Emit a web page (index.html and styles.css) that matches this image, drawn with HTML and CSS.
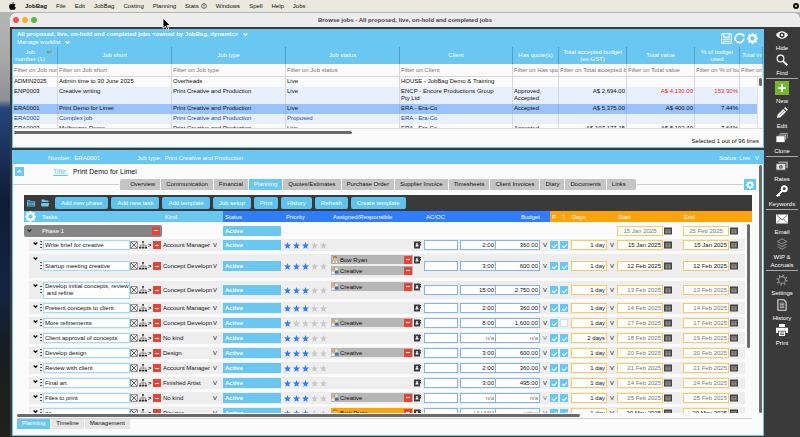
FILE: index.html
```html
<!DOCTYPE html>
<html lang="en">
    <head>
        <meta charset="UTF-8" />
        <meta name="viewport" content="width=device-width, initial-scale=1.0" />
        <title>Browse jobs</title>
        <link rel="stylesheet" href="styles.css">
    </head>
    <body>
        <svg class="sprite" aria-hidden="true">
            <symbol id="i-gear" viewBox="0 0 16 16">
                <path fill-rule="evenodd" fill="currentColor" d="M6.800 0h2.400l.4 2.100 1.300.5L12.700 1.400l1.900 1.900-1.200 1.800.5 1.300 2.100.4v2.400l-2.100.4-.5 1.300 1.200 1.800-1.900 1.900-1.800-1.200-1.300.5L9.200 16H6.800l-.4-2.100-1.300-.5-1.800 1.200-1.900-1.900 1.200-1.800-.5-1.300L0 9.200V6.800l2.100-.4.5-1.300-1.200-1.800 1.900-1.900 1.800 1.200 1.300-.5zM8 4.800a3.200 3.200 0 1 0 0 6.400 3.200 3.200 0 0 0 0-6.400z" />
            </symbol>
            <symbol id="i-star" viewBox="0 0 16 16">
                <path fill="currentColor" d="M8 0l2.200 5.500 5.800.4-4.500 3.800 1.500 5.900L8 12.400l-5 3.200 1.500-5.900L0 5.900l5.800-.4z" />
            </symbol>
            <symbol id="i-chevron" viewBox="0 0 8 8">
                <path fill="none" stroke="currentColor" stroke-width="2" d="M1 2.500l3 3 3-3" />
            </symbol>
            <symbol id="i-cross" viewBox="0 0 14 14">
                <path fill="none" stroke="#444" d="M1 1h12v12H1z" />
                <path fill="none" stroke="#333" stroke-width="1.300" d="M2 2l10 10M12 2L2 12" />
            </symbol>
            <symbol id="i-tree" viewBox="0 0 14 14">
                <path fill="none" stroke="#555" d="M7 3v7M2 10V7h10v3" />
                <path fill="#333" d="M5.500 0h3v3h-3zM0 10h4v3H0zM5 10h4v3H5zM10 10h4v3h-4z" />
            </symbol>
            <symbol id="i-calendar" viewBox="0 0 16 16">
                <path fill="#444" d="M0 1h16v14H0z" />
                <path stroke="#bbb" stroke-width="1" d="M2 5.500h12M2 8.500h12M2 11.500h12M5.500 5v8M10.500 5v8" />
            </symbol>
            <symbol id="i-contact" viewBox="0 0 14 14">
                <path fill="#3c3c3c" d="M0 0h12v14H0zM12 1h2v3h-2zM12 5h2v3h-2z" />
                <path fill="#fff" d="M6 3a1.800 1.800 0 0 1 1 3.300l2 1.700v2H3V8l2-1.700A1.800 1.800 0 0 1 6 3z" />
            </symbol>
            <symbol id="i-person" viewBox="0 0 14 14">
                <path fill="#fff" stroke="#7b8fb0" d="M2 13V9l3-2h4l3 2v4z" />
                <circle cx="7" cy="4" r="3.500" fill="#e9b872" />
                <path fill="#9a5b20" d="M3.500 4a3.500 3.500 0 0 1 7 0L7 2z" />
                <path fill="#e57c2c" d="M6 8h2v5H6z" />
            </symbol>
            <symbol id="i-group" viewBox="0 0 16 14">
                <path fill="#fff" stroke="#a9bbd6" d="M1 13V9l3-2 3 2v4z" />
                <path fill="#3d70b5" d="M8 12V7l3-2 4 2v5z" />
                <circle cx="5" cy="5" r="3" fill="#efbd72" />
                <circle cx="11" cy="3" r="3" fill="#f5dcaa" />
                <path fill="#b87a38" d="M2 5a3 3 0 0 1 6 0L5 3z" />
            </symbol>
        </svg>

        <nav class="menubar">
            <svg class="apple" viewBox="0 0 14 16" aria-hidden="true"><path d="M9.500 0c.2 1.800-1.200 3.300-2.800 3.400C6.500 1.700 8 .2 9.500 0zM7 4.500c.8 0 1.800-1 3.300-.9 1.200.1 2.200.6 2.900 1.600-2.600 1.700-2.100 5 .6 6-.7 1.900-2.100 4.600-3.700 4.600-1.200 0-1.700-.7-3-.7s-1.900.7-3 .7C1.800 15.800-.4 10.500.5 7.200 1.200 4.700 3 3.600 4.600 3.600c1 0 1.800.9 2.400.9z" /></svg>
            <a href="#" class="app-name">JobBag</a>
            <a href="#">File</a>
            <a href="#">Edit</a>
            <a href="#">JobBag</a>
            <a href="#">Costing</a>
            <a href="#">Planning</a>
            <a href="#">Stats
                <svg class="clock" viewBox="0 0 10 10" aria-hidden="true"><circle cx="5" cy="5" r="4" /><path d="M5 2.500V5.500M5 6.500v1" /></svg></a>
            <a href="#">Windows</a>
            <a href="#">Spell</a>
            <a href="#">Help</a>
            <a href="#">Jobs</a>
            <span class="status-dot"></span>
        </nav>

        <div class="window">
            <header class="titlebar">
                <span class="light red"></span>
                <span class="light amber"></span>
                <span class="light green"></span>
                <h1>Browse jobs - All proposed, live, on-hold and completed jobs</h1>
            </header>

            <div class="workspace">
                <main class="main">
                    <section class="panel jobs">
                        <div class="jobs-top">
                            <div class="worklist">
                                <button class="bold">All proposed, live, on-hold and completed jobs &lt;owned by JobBag, dynamic&gt; <svg class="chevron"><use href="#i-chevron" /></svg></button>
                                <button>Manage worklist <svg class="chevron"><use href="#i-chevron" /></svg></button>
                            </div>
                            <div class="jobs-tools">
                                <button aria-label="Save"><svg viewBox="0 0 16 16"><path fill="none" stroke="#fff" stroke-width="1.500" d="M1 1h14v14H1zM4 1v5h8V1M3 9h10M3 12h10" /></svg></button>
                                <button aria-label="Reload"><svg viewBox="0 0 16 16"><path fill="none" stroke="#fff" stroke-width="2.400" d="M12 2.800A6.300 6.300 0 1 0 14.300 8" /><path fill="#fff" d="M9.500 1H15v5.500z" /></svg></button>
                                <button aria-label="List settings"><svg class="white"><use href="#i-gear" /></svg></button>
                            </div>
                        </div>
                        <div class="jobs-scroll">
                            <table class="jobs-table">
                                <colgroup>
                                    <col class="c-number"><col class="c-long"><col class="c-long"><col class="c-long"><col class="c-client">
                                    <col class="c-short"><col class="c-money"><col class="c-money"><col class="c-number"><col>
                                </colgroup>
                                <thead>
                                    <tr>
                                        <th>Job <span class="sort">↩</span><br>number (1)</th>
                                        <th>Job short</th>
                                        <th>Job type</th>
                                        <th>Job status</th>
                                        <th>Client</th>
                                        <th>Has quote(s)</th>
                                        <th>Total accepted budget (ex-GST)</th>
                                        <th>Total value</th>
                                        <th>% of budget used</th>
                                        <th>Total inv</th>
                                    </tr>
                                    <tr class="filters">
                                        <td><input type="text" placeholder="Filter on Job number" aria-label="Filter on Job number"></td>
                                        <td><input type="text" placeholder="Filter on Job short" aria-label="Filter on Job short"></td>
                                        <td><input type="text" placeholder="Filter on Job type" aria-label="Filter on Job type"></td>
                                        <td><input type="text" placeholder="Filter on Job status" aria-label="Filter on Job status"></td>
                                        <td><input type="text" placeholder="Filter on Client" aria-label="Filter on Client"></td>
                                        <td><input type="text" placeholder="Filter on Has quote(s)" aria-label="Filter on Has quote(s)"></td>
                                        <td><input type="text" placeholder="Filter on Total accepted budget" aria-label="Filter on Total accepted budget"></td>
                                        <td><input type="text" placeholder="Filter on Total value" aria-label="Filter on Total value"></td>
                                        <td><input type="text" placeholder="Filter on % of budget used" aria-label="Filter on % of budget used"></td>
                                        <td><input type="text" placeholder="Filter on Total invoiced" aria-label="Filter on Total invoiced"></td>
                                    </tr>
                                </thead>
                                <tbody>
                                    <tr>
                                        <td>ADMIN2025</td><td>Admin time to 30 June 2025</td><td>Overheads</td><td>Live</td><td>HOUSE - JobBag Demo &amp; Training</td>
                                        <td></td><td></td><td></td><td></td><td></td>
                                    </tr>
                                    <tr class="even double">
                                        <td>ENP0003</td><td>Creative writing</td><td>Print Creative and Production</td><td>Live</td><td>ENCP - Encore Productions Group<br>Pty Ltd</td>
                                        <td>Approved, Accepted</td><td class="num">A$ 2,694.00</td><td class="num over">A$ 4,130.00</td><td class="num over">153.30%</td><td></td>
                                    </tr>
                                    <tr class="selected">
                                        <td>ERA0001</td><td>Print Demo for Limei</td><td>Print Creative and Production</td><td>Live</td><td>ERA - Era-Co</td>
                                        <td>Accepted</td><td class="num">A$ 5,375.00</td><td class="num">A$ 400.00</td><td class="num">7.44%</td><td></td>
                                    </tr>
                                    <tr class="even proposed">
                                        <td>ERA0002</td><td>Complex job</td><td>Print Creative and Production</td><td>Proposed</td><td>ERA - Era-Co</td>
                                        <td></td><td></td><td></td><td></td><td></td>
                                    </tr>
                                    <tr>
                                        <td>ERA0003</td><td>Melbourne Demo</td><td>Print Creative and Production</td><td>Live</td><td>ERA - Era-Co</td>
                                        <td>Accepted</td><td class="num">A$ 107,177.25</td><td class="num">A$ 8,192.40</td><td class="num">7.64%</td><td></td>
                                    </tr>
                                </tbody>
                            </table>
                            <div class="track"><span class="thumb"></span></div>
                        </div>
                        <div class="hbar jobs-hbar"></div>
                        <p class="selection">Selected 1 out of 96 lines</p>
                    </section>

                    <section class="panel job">
                        <div class="job-info">
                            <span>Number:&nbsp; ERA0001</span>
                            <span>Job type:&nbsp; Print Creative and Production</span>
                            <span class="job-status">Status: Live <span class="vee">V</span></span>
                        </div>
                        <div class="job-body">
                            <div class="job-content">
                                <div class="job-title">
                                    <button class="collapse" aria-label="Collapse"><svg viewBox="0 0 8 8"><path fill="none" stroke="#fff" stroke-width="2" d="M1 5.500l3-3 3 3" /></svg></button>
                                    <label for="title">Title:</label>
                                    <input type="text" id="title" value="Print Demo for Limei">
                                </div>
                                <div class="tabs">
                                    <a href="#" class="first">Overview</a>
                                    <a href="#">Communication</a>
                                    <a href="#">Financial</a>
                                    <a href="#" class="active">Planning</a>
                                    <a href="#">Quotes/Estimates</a>
                                    <a href="#">Purchase Order</a>
                                    <a href="#">Supplier Invoice</a>
                                    <a href="#">Timesheets</a>
                                    <a href="#">Client Invoices</a>
                                    <a href="#">Diary</a>
                                    <a href="#">Documents</a>
                                    <a href="#" class="last">Links</a>
                                    <button class="tab-gear" aria-label="Tab settings"><svg class="white"><use href="#i-gear" /></svg></button>
                                </div>
                                <div class="planner">
                                    <div class="toolbar">
                                        <button class="icon" aria-label="Expand all"><svg viewBox="0 0 16 16"><path fill="#55bfec" d="M0 2h6l2 2h8v11H0z" /><path stroke="#333" d="M2 7h12M2 10h12M2 13h12M0 4.500h16" /></svg></button>
                                        <button class="icon" aria-label="Collapse all"><svg viewBox="0 0 16 16"><path fill="#6cc8f0" d="M1 1h6l2 2h6v3H1zM0 8h16l-1 7H1z" /></svg></button>
                                        <button>Add new phase</button>
                                        <button>Add new task</button>
                                        <button>Add template</button>
                                        <button>Job setup</button>
                                        <button>Print</button>
                                        <button>History</button>
                                        <button>Refresh</button>
                                        <button>Create template</button>
                                    </div>
                                    <div class="task-scroll">
                                        <table class="tasks">
                                            <colgroup>
                                                <col class="w-edge"><col class="w-open"><col class="w-task"><col class="w-acts"><col class="w-kind">
                                                <col class="w-status"><col class="w-stars"><col class="w-who"><col class="w-book"><col class="w-ac">
                                                <col class="w-hours"><col class="w-budget"><col class="w-vee"><col class="w-p"><col class="w-t">
                                                <col class="w-days"><col class="w-vee"><col class="w-start"><col><col class="w-gutter">
                                            </colgroup>
                                            <thead>
                                                <tr>
                                                    <th colspan="2" class="sky gear-cell"><svg class="white"><use href="#i-gear" /></svg></th>
                                                    <th colspan="2" class="sky">Tasks</th>
                                                    <th class="sky">Kind</th>
                                                    <th class="blue">Status</th>
                                                    <th class="blue">Priority</th>
                                                    <th class="blue" colspan="2">Assigned/Responsible</th>
                                                    <th class="blue" colspan="2">AC/OC</th>
                                                    <th class="blue right">Budget</th>
                                                    <th class="blue"></th>
                                                    <th class="orange pick">P</th>
                                                    <th class="orange pick">T</th>
                                                    <th class="orange" colspan="2">Days</th>
                                                    <th class="orange">Start</th>
                                                    <th class="orange" colspan="2">End</th>
                                                </tr>
                                            </thead>
                                            <tbody id="tasks">
                                                <tr class="phase">
                                                    <td colspan="4">
                                                        <div class="phase-bar">
                                                            <svg class="chevron"><use href="#i-chevron" /></svg>
                                                            <span>Phase 1</span>
                                                            <button class="minus" aria-label="Remove phase"></button>
                                                        </div>
                                                    </td>
                                                    <td></td>
                                                    <td><div class="state">Active</div></td>
                                                    <td colspan="11"></td>
                                                    <td><div class="date"><input type="text" class="late" value="15 Jan 2025" aria-label="Phase start"><svg><use href="#i-calendar" /></svg></div></td>
                                                    <td><div class="date"><input type="text" class="late" value="25 Feb 2025" aria-label="Phase end"><svg><use href="#i-calendar" /></svg></div></td>
                                                    <td></td>
                                                </tr>
                                            </tbody>
                                        </table>
                                        <span class="thumb task-thumb"></span>
                                    </div>
                                </div>
                            </div>
                            <span class="thumb job-thumb"></span>
                        </div>
                        <div class="hbar job-hbar"></div>
                        <div class="views">
                            <a href="#" class="active">Planning</a>
                            <a href="#">Timeline</a>
                            <a href="#">Management</a>
                        </div>
                    </section>
                </main>

                <aside class="sidebar">
                    <div class="group">
                        <button><svg viewBox="0 0 16 16"><path fill="#fff" d="M0 8c4-6.500 12-6.500 16 0-4 6.500-12 6.500-16 0z" /><circle cx="8" cy="8" r="3.500" fill="#3a3a3a" /><circle cx="8" cy="8" r="1.500" fill="#fff" /></svg>Hide</button>
                        <button><svg viewBox="0 0 16 16"><circle cx="6" cy="6" r="4.500" fill="none" stroke="#fff" stroke-width="1.500" /><path stroke="#fff" stroke-width="2.500" d="M9.500 9.500L15 15" /></svg>Find</button>
                    </div>
                    <div class="group">
                        <button><svg class="new" viewBox="0 0 16 16"><path fill="#74b62e" d="M0 0h16v16H0z" /><path stroke="#fff" stroke-width="2" d="M8 3.500v9M3.500 8h9" /></svg>New</button>
                        <button><svg viewBox="0 0 16 16"><path fill="#eee" d="M1 15l1.200-5 7.500-7.500 3.800 3.800L6 13.800zM10.700 1.600L12.300 0 16 3.700l-1.600 1.600z" /><path stroke="#777" d="M4.500 11.500l7-7" /></svg>Edit</button>
                        <button><svg viewBox="0 0 16 16"><path fill="#bbb" stroke="#3a3a3a" d="M5 1h11v8H5z" /><path fill="#ddd" stroke="#3a3a3a" d="M3 3h11v8H3z" /><path fill="#fff" stroke="#3a3a3a" d="M0 5h12v9H0z" /></svg>Clone</button>
                    </div>
                    <div class="group">
                        <button><svg viewBox="0 0 16 16"><path fill="#999" d="M3 2h13v9H3z" /><path fill="#ddd" stroke="#3a3a3a" d="M0 4.500h13v9H0z" /><circle cx="6.500" cy="9" r="2.500" fill="#555" /><path stroke="#ddd" d="M6.500 7.500v3" /></svg>Rates</button>
                        <button><svg viewBox="0 0 16 16"><circle cx="11" cy="5" r="3.300" fill="none" stroke="#fff" stroke-width="2.800" /><path fill="none" stroke="#fff" stroke-width="2.500" d="M8.500 7.500L1 15M2.500 12l2.500 2.500" /></svg>Keywords</button>
                    </div>
                    <div class="group">
                        <button><svg viewBox="0 0 16 16"><path fill="#fff" d="M0 2h16v12H0z" /><path fill="none" stroke="#555" d="M1 3l7 6 7-6M1 13l5-5M15 13l-5-5" /></svg>Email</button>
                        <button><svg viewBox="0 0 16 16"><path fill="none" stroke="#888" stroke-width="1.400" d="M8 1l6 3.500L8 8 2 4.500zM2 8l6 3.500L14 8M2 11.500L8 15l6-3.500" /></svg>WIP &amp; Accruals</button>
                    </div>
                    <div class="group">
                        <button><svg viewBox="0 0 16 16"><circle cx="8" cy="8" r="4.500" fill="none" stroke="#999" stroke-width="1.400" /><circle cx="8" cy="8" r="6.500" fill="none" stroke="#999" stroke-width="2" stroke-dasharray="2 3.100" /></svg>Settings</button>
                        <button><svg viewBox="0 0 16 16"><path fill="none" stroke="#ddd" stroke-width="1.500" d="M2.500 1h8l3 3v11h-11z" /><path stroke="#ddd" d="M5 5.500h6M5 7.500h6M5 9.500h6M5 11.500h6" /></svg>History</button>
                        <button><svg viewBox="0 0 16 16"><path fill="#fff" d="M4 0h8v4H4zM0 5h16v7h-3V9H3v3H0zM4 10h8v6H4z" /><path stroke="#3a3a3a" d="M5.500 12h5M5.500 14h5" /></svg>Print</button>
                    </div>
                </aside>
            </div>
        </div>

        <svg class="pointer" viewBox="0 0 10 16" aria-hidden="true"><path fill="#000" stroke="#fff" d="M1 1v12l2.800-2.500L5.700 15l2-.9-1.900-4.200h3.700z" /></svg>

        <script src="script.js"></script>
    </body>
</html>
```

FILE: styles.css
```css
* {
    box-sizing: border-box;
}
body {
    display: flex;
    flex-direction: column;
    height: 100vh;
    margin: 0;
    overflow: hidden;
    background: linear-gradient(#b9babb 0, #a9a6a6 60px, #8d8f98 100px, #24457d 108px, #1d3763 140px, #0f1c38 200px, #13233f 290px, #171d20 350px, #20211b 100%);
    font-family: 'Liberation Sans', Arial, sans-serif;
    font-size: 6px;
    line-height: 8px;
    color: #111;
}
button,
input,
textarea,
select {
    margin: 0;
    padding: 0;
    border: 0;
    border-radius: 0;
    background: none;
    color: inherit;
    font: inherit;
}
button {
    cursor: pointer;
}
a {
    color: inherit;
    text-decoration: none;
}
svg {
    display: block;
}
.sprite {
    position: absolute;
    width: 0;
    height: 0;
}
.white {
    color: #fff;
}
.bold {
    font-weight: bold;
}
.chevron {
    width: 5px;
    height: 5px;
}

/* menu bar */
.menubar {
    display: flex;
    align-items: center;
    gap: 9px;
    height: 12px;
    padding: 0 1px 0 9px;
    background: #ebe9df;
}
.menubar a {
    display: flex;
    gap: 2px;
    align-items: center;
}
.menubar .app-name {
    font-weight: bold;
}
.apple {
    width: 7px;
    height: 8px;
}
.clock {
    width: 6px;
    height: 6px;
    fill: none;
    stroke: #111;
}
.status-dot {
    width: 6px;
    height: 6px;
    margin-left: auto;
    border: 2px solid #111;
    border-radius: 50%;
}

/* window */
.window {
    display: flex;
    flex: 1;
    flex-direction: column;
    min-height: 0;
    margin: 1px 0 0 10px;
    border-radius: 5px 5px 0 0;
    background: #3a3a3a;
    overflow: hidden;
}
.titlebar {
    display: flex;
    align-items: center;
    gap: 3px;
    height: 14px;
    padding: 0 3px;
    background: #ececec;
}
.titlebar h1 {
    flex: 1;
    margin: 0 27px 0 0;
    font-size: 6px;
    text-align: center;
    color: #444;
}
.light {
    width: 6px;
    height: 6px;
    border-radius: 50%;
}
.red {
    background: #f2544c;
}
.amber {
    background: #f5b02e;
}
.green {
    background: #5fb63f;
}
.workspace {
    display: flex;
    flex: 1;
    min-height: 0;
    padding: 1px 0 1px 2px;
}
.main {
    display: flex;
    flex: 1;
    flex-direction: column;
    gap: 2px;
    min-width: 0;
    padding-top: 1px;
}
.panel {
    display: flex;
    flex-direction: column;
    border: 1px solid #69c7f1;
    background: #fbfbfb;
}
.thumb {
    position: absolute;
    width: 3px;
    border-radius: 2px;
    background: #6a6a6a;
}
.hbar {
    height: 3px;
    border-radius: 2px;
    background: #6a6a6a;
}

/* job list */
.jobs-top {
    display: flex;
    justify-content: space-between;
    height: 17px;
    padding: 0 5px 0 4px;
    background: #69c7f1;
    color: #fff;
}
.worklist button {
    display: flex;
    align-items: center;
    gap: 5px;
    height: 8px;
    white-space: nowrap;
}
.jobs-tools {
    display: flex;
    gap: 2px;
    align-items: center;
}
.jobs-tools svg {
    width: 11px;
    height: 11px;
}
.jobs-scroll {
    position: relative;
    height: 82px;
    overflow: hidden;
    border-bottom: 1px solid #ddd;
}
.jobs-table {
    width: 100%;
    border-spacing: 0;
    table-layout: fixed;
}
.c-number {
    width: 45px;
}
.c-short {
    width: 46px;
}
.c-long {
    width: 114px;
}
.c-client {
    width: 113px;
}
.c-money {
    width: 68px;
}
.jobs-table th {
    height: 17px;
    padding: 0 2px;
    border-right: 1px solid #4f9fc8;
    background: #69c7f1;
    color: #fff;
    font-weight: normal;
    line-height: 7px;
    overflow: hidden;
}
.jobs-table th:first-child {
    padding-right: 12px;
    white-space: nowrap;
}
.jobs-table th:last-child {
    white-space: nowrap;
}
.sort {
    position: absolute;
    left: 34px;
    color: #8f8a1c;
    font-weight: bold;
}
.jobs-table td {
    height: 10px;
    padding: 1px 1px 0;
    border-right: 1px solid #d5d8dd;
    line-height: 7px;
    vertical-align: top;
}
.jobs-table .filters td {
    height: 13px;
    padding: 2px 0 0 1px;
    border-bottom: 1px solid #d5d8dd;
}
.filters input {
    display: block;
    width: 100%;
    height: 8px;
}
.filters input::placeholder {
    color: #777;
}
.even td {
    background: #e8f0fd;
}
.double td {
    height: 17px;
}
.selected td {
    border-color: #8db4f0;
    background: #9ac2fb;
}
.proposed {
    color: #1249a8;
}
.num {
    text-align: right;
}
.over {
    color: #f02a20;
}
.track {
    position: absolute;
    top: 30px;
    right: 0;
    bottom: 0;
    width: 6px;
    border-left: 1px solid #e4e4e4;
    background: #fbfbfb;
}
.track .thumb {
    top: 1px;
    left: 1px;
    height: 8px;
}
.jobs-hbar {
    width: 45%;
    margin: 2px 1px 1px;
}
.selection {
    margin: 2px 4px;
    text-align: right;
}

/* job detail */
.job {
    flex: 1;
    min-height: 0;
}
.job-info {
    display: flex;
    gap: 39px;
    align-items: center;
    height: 13px;
    padding: 0 4px 0 35px;
    background: #69c7f1;
    color: #fff;
}
.job-info span:nth-child(2) {
    margin-left: -2px;
}
.job-status {
    margin-left: auto;
}
.vee {
    margin-left: 3px;
}
.job-body {
    position: relative;
    display: flex;
    flex: 1;
    min-height: 0;
    padding-right: 7px;
}
.job-content {
    display: flex;
    flex: 1;
    flex-direction: column;
    min-width: 0;
}
.job-thumb {
    top: 1px;
    right: 1px;
    bottom: 0;
}
.job-title {
    display: flex;
    align-items: center;
    height: 15px;
    padding-left: 2px;
    font-size: 7px;
}
.collapse {
    width: 9px;
    height: 9px;
    margin-right: 29px;
    background: #69c7f1;
}
.collapse svg {
    width: 5px;
    height: 5px;
    margin: 0 auto;
}
.job-title label {
    margin-right: 5px;
    color: #69c7f1;
    text-decoration: underline;
}
.job-title input {
    flex: 1;
}
.tabs {
    display: flex;
    gap: 1px;
    height: 11px;
    line-height: 11px;
}
.tabs::before,
.tabs::after {
    flex: 1;
    height: 1px;
    margin: 5px 0;
    background: #ccc;
    content: '';
}
.tabs a {
    padding: 0 5px;
    background: #c5c5c5;
}
.tabs .first {
    padding-left: 10px;
    border-radius: 2px 0 0 0;
}
.tabs .last {
    padding-right: 10px;
    border-radius: 0 2px 0 0;
}
.tabs .active {
    background: #69c7f1;
    color: #fff;
}
.tab-gear {
    order: 1;
    width: 12px;
    height: 11px;
    background: #69c7f1;
}
.tab-gear svg {
    width: 8px;
    height: 8px;
    margin: 0 auto;
}
.planner {
    display: flex;
    flex: 1;
    flex-direction: column;
    min-height: 0;
    margin: 5px 4px 0 11px;
}
.toolbar {
    display: flex;
    gap: 3px;
    align-items: center;
    height: 16px;
    padding-left: 3px;
    background: #3a3a3a;
    color: #fff;
}
.toolbar button {
    height: 12px;
    padding: 0 6px;
    border-radius: 2px;
    background: #5fc3ef;
}
.toolbar .icon {
    padding: 0 3px 0 0;
    background: none;
}
.toolbar .icon svg {
    width: 8px;
    height: 8px;
}
.task-scroll {
    position: relative;
    flex: 1;
    min-height: 0;
    overflow: hidden;
}
.task-thumb {
    top: 13px;
    right: 2px;
    height: 124px;
}

/* task table */
.tasks {
    width: 100%;
    border-spacing: 0;
    table-layout: fixed;
}
.w-edge {
    width: 5px;
}
.w-open {
    width: 11px;
}
.w-task {
    width: 90px;
}
.w-acts {
    width: 33px;
}
.w-kind {
    width: 60px;
}
.w-status {
    width: 61px;
}
.w-stars {
    width: 47px;
}
.w-who {
    width: 82px;
}
.w-book {
    width: 11px;
}
.w-ac {
    width: 36px;
}
.w-hours {
    width: 35px;
}
.w-budget {
    width: 45px;
}
.w-vee {
    width: 10px;
}
.w-p {
    width: 10px;
}
.w-t {
    width: 11px;
}
.w-days {
    width: 36px;
}
.w-start {
    width: 66px;
}
.w-gutter {
    width: 7px;
}
.tasks th {
    height: 11px;
    padding: 0 2px;
    color: #fff;
    font-weight: normal;
    text-align: left;
}
.tasks .gear-cell {
    padding: 0 1px;
}
.gear-cell svg {
    width: 11px;
    height: 11px;
}
.tasks .right {
    padding: 0;
    text-align: right;
}
.sky {
    background: #69c7f1;
}
.blue {
    background: #2f7cff;
}
.tasks .orange {
    padding: 0 1px;
    background: #ffa20c;
}
.tasks .pick {
    padding: 0 2px;
}
.tasks td {
    padding: 0;
}
.tasks .phase td {
    height: 17px;
}
.phase-bar {
    display: flex;
    align-items: center;
    width: 138px;
    height: 12px;
    padding: 0 2px 0 3px;
    border-radius: 2px;
    background: #858585;
    color: #fff;
}
.phase-bar span {
    flex: 1;
    margin-left: 10px;
}
.phase-bar .chevron {
    color: #333;
}
.task td {
    height: 15px;
    border-bottom: 3px solid #fbfbfb;
    background: #eeeeef;
}
.task.tall td {
    height: 27px;
}
.task .top {
    padding-top: 1px;
    vertical-align: top;
}
.task td:first-child,
.task td:last-child {
    background: none;
}
.top .chevron {
    margin: 1px 0 0 4px;
}
.name {
    display: flex;
    align-items: center;
    gap: 1px;
}
.name::before {
    width: 2px;
    height: 8px;
    background: repeating-linear-gradient(#555 0 1px, transparent 1px 3px);
    content: '';
}
.tasks input[type='text'],
.tasks textarea {
    display: block;
    width: 100%;
    height: 10px;
    padding: 0 1px;
    border: 1px solid #9bdcf7;
    background: #fff;
    line-height: 7px;
}
.tasks .name input,
.tasks .name textarea {
    width: 87px;
}
.tasks textarea {
    height: 17px;
    margin: 1px 0 0;
    resize: none;
    overflow: hidden;
    white-space: pre;
}
.acts {
    display: flex;
    gap: 1px;
    align-items: center;
}
.acts svg {
    width: 8px;
    height: 8px;
}
.acts button:nth-child(3) {
    font-weight: bold;
}
.minus {
    display: flex;
    align-items: center;
    justify-content: center;
    width: 8px;
    height: 8px;
    background: #ea4335;
}
.minus::before {
    width: 4px;
    height: 1px;
    background: #fff;
    content: '';
}
.kind {
    display: flex;
    gap: 1px;
}
.kind select {
    width: 49px;
    height: 8px;
    appearance: none;
    overflow: hidden;
    text-overflow: clip;
}
.state {
    width: 58px;
    height: 10px;
    padding: 0 2px;
    background: #69c7f1;
    color: #fff;
    font-weight: bold;
    line-height: 10px;
}
.stars {
    display: flex;
    gap: 2px;
    color: #c8c8c8;
}
.stars svg {
    width: 7px;
    height: 7px;
}
.stars .on {
    color: #2f7cff;
}
.chips {
    display: flex;
    flex-direction: column;
    gap: 2px;
}
.chip {
    display: flex;
    align-items: center;
    gap: 1px;
    height: 9px;
    padding-right: 1px;
    background: #b5b5b5;
}
.chip span {
    flex: 1;
}
.chip svg {
    width: 8px;
    height: 8px;
}
.chip.busy {
    background: #ffa20c;
}
.book {
    width: 7px;
    height: 8px;
    margin: 1px 0 0 1px;
}
.tasks .money input {
    border-color: #80b4f5;
    text-align: right;
}
.tasks .money .ac {
    width: 34px;
}
.tasks .money .hours {
    border-right: 0;
}
.tasks .late {
    color: #777;
}
.tasks input[type='checkbox'] {
    display: flex;
    align-items: center;
    justify-content: center;
    width: 8px;
    height: 8px;
    appearance: none;
    border: 1px solid #bfe6f8;
    background: #fff;
}
.tasks input[type='checkbox']:checked {
    border: 0;
    background: #69c7f1;
}
.tasks input[type='checkbox']:checked::before {
    width: 4px;
    height: 2px;
    border: solid #fff;
    border-width: 0 0 1px 1px;
    transform: rotate(-45deg);
    content: '';
}
.tasks .when input {
    border-color: #f8cc62;
    text-align: right;
}
.center-vee {
    text-align: center;
}
.date {
    display: flex;
    align-items: center;
    gap: 1px;
}
.tasks .date input {
    width: 46px;
    border-color: #f8cc62;
    text-align: right;
}
.tasks .phase .date input {
    text-align: center;
}
.date svg {
    width: 8px;
    height: 8px;
}

/* bottom */
.job-hbar {
    width: 75%;
    margin: 1px 4px;
}
.views {
    display: flex;
    gap: 1px;
    height: 17px;
    margin: 0 11px 0 4px;
    border-top: 1px solid #ccc;
    line-height: 9px;
}
.views a {
    height: 10px;
    padding: 0 5px;
    background: #e6e6e6;
}
.views .active {
    background: #69c7f1;
    color: #fff;
}

/* sidebar */
.sidebar {
    width: 36px;
    padding: 0 2px;
    color: #fff;
}
.group {
    margin-bottom: 2px;
    border-bottom: 1px solid #aaa;
}
.group:last-child {
    border: 0;
}
.group button {
    display: flex;
    flex-direction: column;
    align-items: center;
    gap: 2px;
    width: 100%;
    padding-bottom: 1px;
}
.group svg {
    width: 12px;
    height: 14px;
}
.group .new {
    width: 14px;
}

.pointer {
    position: absolute;
    top: 17px;
    left: 162px;
    width: 9px;
    height: 14px;
}
```

FILE: script.js
```js
const tasks = [
    { name: 'Write brief for creative', kind: 'Account Manager', stars: 3, who: [], hours: '2:00', budget: '360.00', days: '1 day', start: '15 Jan 2025', end: '15 Jan 2025' },
    { name: 'Startup meeting creative', kind: 'Concept Development', stars: 3, who: ['Bow Ryan', 'Creative'], hours: '3:00', budget: '600.00', days: '1 day', start: '12 Feb 2025', end: '12 Feb 2025', tall: true },
    { name: 'Develop initial concepts, review\n and refine', kind: 'Concept Development', stars: 3, who: ['Creative'], hours: '15:00', budget: '2,750.00', days: '1 day', start: '13 Feb 2025', end: '13 Feb 2025', late: true },
    { name: 'Present concepts to client', kind: 'Account Manager', stars: 3, who: [], hours: '2:00', budget: '360.00', days: '1 day', start: '14 Feb 2025', end: '14 Feb 2025', late: true },
    { name: 'More refinements', kind: 'Concept Development', stars: 1, who: ['Creative'], hours: '8:00', budget: '1,600.00', days: '1 day', start: '17 Feb 2025', end: '17 Feb 2025', late: true, noT: true },
    { name: 'Client approval of concepts', kind: 'No kind', stars: 3, who: [], hours: 'n/a', budget: 'n/a', days: '2 days', start: '18 Feb 2025', end: '19 Feb 2025', late: true },
    { name: 'Develop design', kind: 'Design', stars: 3, who: ['Creative'], hours: '3:00', budget: '600.00', days: '1 day', start: '20 Feb 2025', end: '20 Feb 2025', late: true },
    { name: 'Review with client', kind: 'Account Manager', stars: 3, who: [], hours: '2:00', budget: '360.00', days: '1 day', start: '21 Feb 2025', end: '21 Feb 2025', late: true },
    { name: 'Final art', kind: 'Finished Artist', stars: 3, who: [], hours: '3:00', budget: '495.00', days: '1 day', start: '24 Feb 2025', end: '24 Feb 2025', late: true },
    { name: 'Files to print', kind: 'No kind', stars: 3, who: ['Creative'], hours: 'n/a', budget: 'n/a', days: '1 day', start: '25 Feb 2025', end: '25 Feb 2025', late: true },
    { name: 'qa', kind: 'Director', stars: 3, who: ['Bow Ryan'], hours: 'HH:MM', budget: 'value', days: '1 day', start: '20 May 2025', end: '20 May 2025', busy: true, empty: true },
]

const icon = (id, cls = '') => `<svg class="${cls}"><use href="#i-${id}" /></svg>`

const nameField = (t) =>
    t.name.includes('\n')
        ? `<textarea aria-label="Task">${t.name}</textarea>`
        : `<input type="text" aria-label="Task" value="${t.name}">`

const chip = (name, busy) =>
    `<div class="chip ${busy ? 'busy' : ''}">${icon(name === 'Creative' ? 'group' : 'person')}<span>${name}</span><button class="minus" aria-label="Unassign"></button></div>`

const row = (t) => {
    const grey = t.hours === 'n/a' || t.empty ? 'late' : ''
    const late = t.late ? 'late' : ''
    const stars = [1, 2, 3, 4, 5].map((n) => icon('star', n <= t.stars ? 'on' : '')).join('')

    return `<tr class="task ${t.tall ? 'tall' : ''}">
        <td></td>
        <td class="top">${icon('chevron', 'chevron')}</td>
        <td><div class="name">${nameField(t)}</div></td>
        <td><div class="acts">
            <button aria-label="Clear">${icon('cross')}</button>
            <button aria-label="Dependencies">${icon('tree')}</button>
            <button>&gt;</button>
            <button class="minus" aria-label="Remove task"></button>
        </div></td>
        <td><div class="kind"><select aria-label="Kind"><option>${t.kind}</option></select><span>V</span></div></td>
        <td><div class="state">Active</div></td>
        <td><div class="stars">${stars}</div></td>
        <td class="top"><div class="chips">${t.who.map((w) => chip(w, t.busy)).join('')}</div></td>
        <td class="top">${icon('contact', 'book')}</td>
        <td class="money"><input type="text" class="ac" aria-label="AC/OC"></td>
        <td class="money"><input type="text" class="hours ${grey}" aria-label="Hours" value="${t.hours}"></td>
        <td class="money"><input type="text" class="${grey}" aria-label="Budget" value="${t.budget}"></td>
        <td class="center-vee ${grey}">V</td>
        <td><input type="checkbox" aria-label="P" checked></td>
        <td><input type="checkbox" aria-label="T" ${t.noT ? '' : 'checked'}></td>
        <td class="when"><input type="text" aria-label="Days" value="${t.days}"></td>
        <td class="center-vee">V</td>
        <td><div class="date"><input type="text" class="${late}" aria-label="Start" value="${t.start}">${icon('calendar')}</div></td>
        <td><div class="date"><input type="text" class="${late}" aria-label="End" value="${t.end}">${icon('calendar')}</div></td>
        <td></td>
    </tr>`
}

document.getElementById('tasks').insertAdjacentHTML('beforeend', tasks.map(row).join(''))
```
